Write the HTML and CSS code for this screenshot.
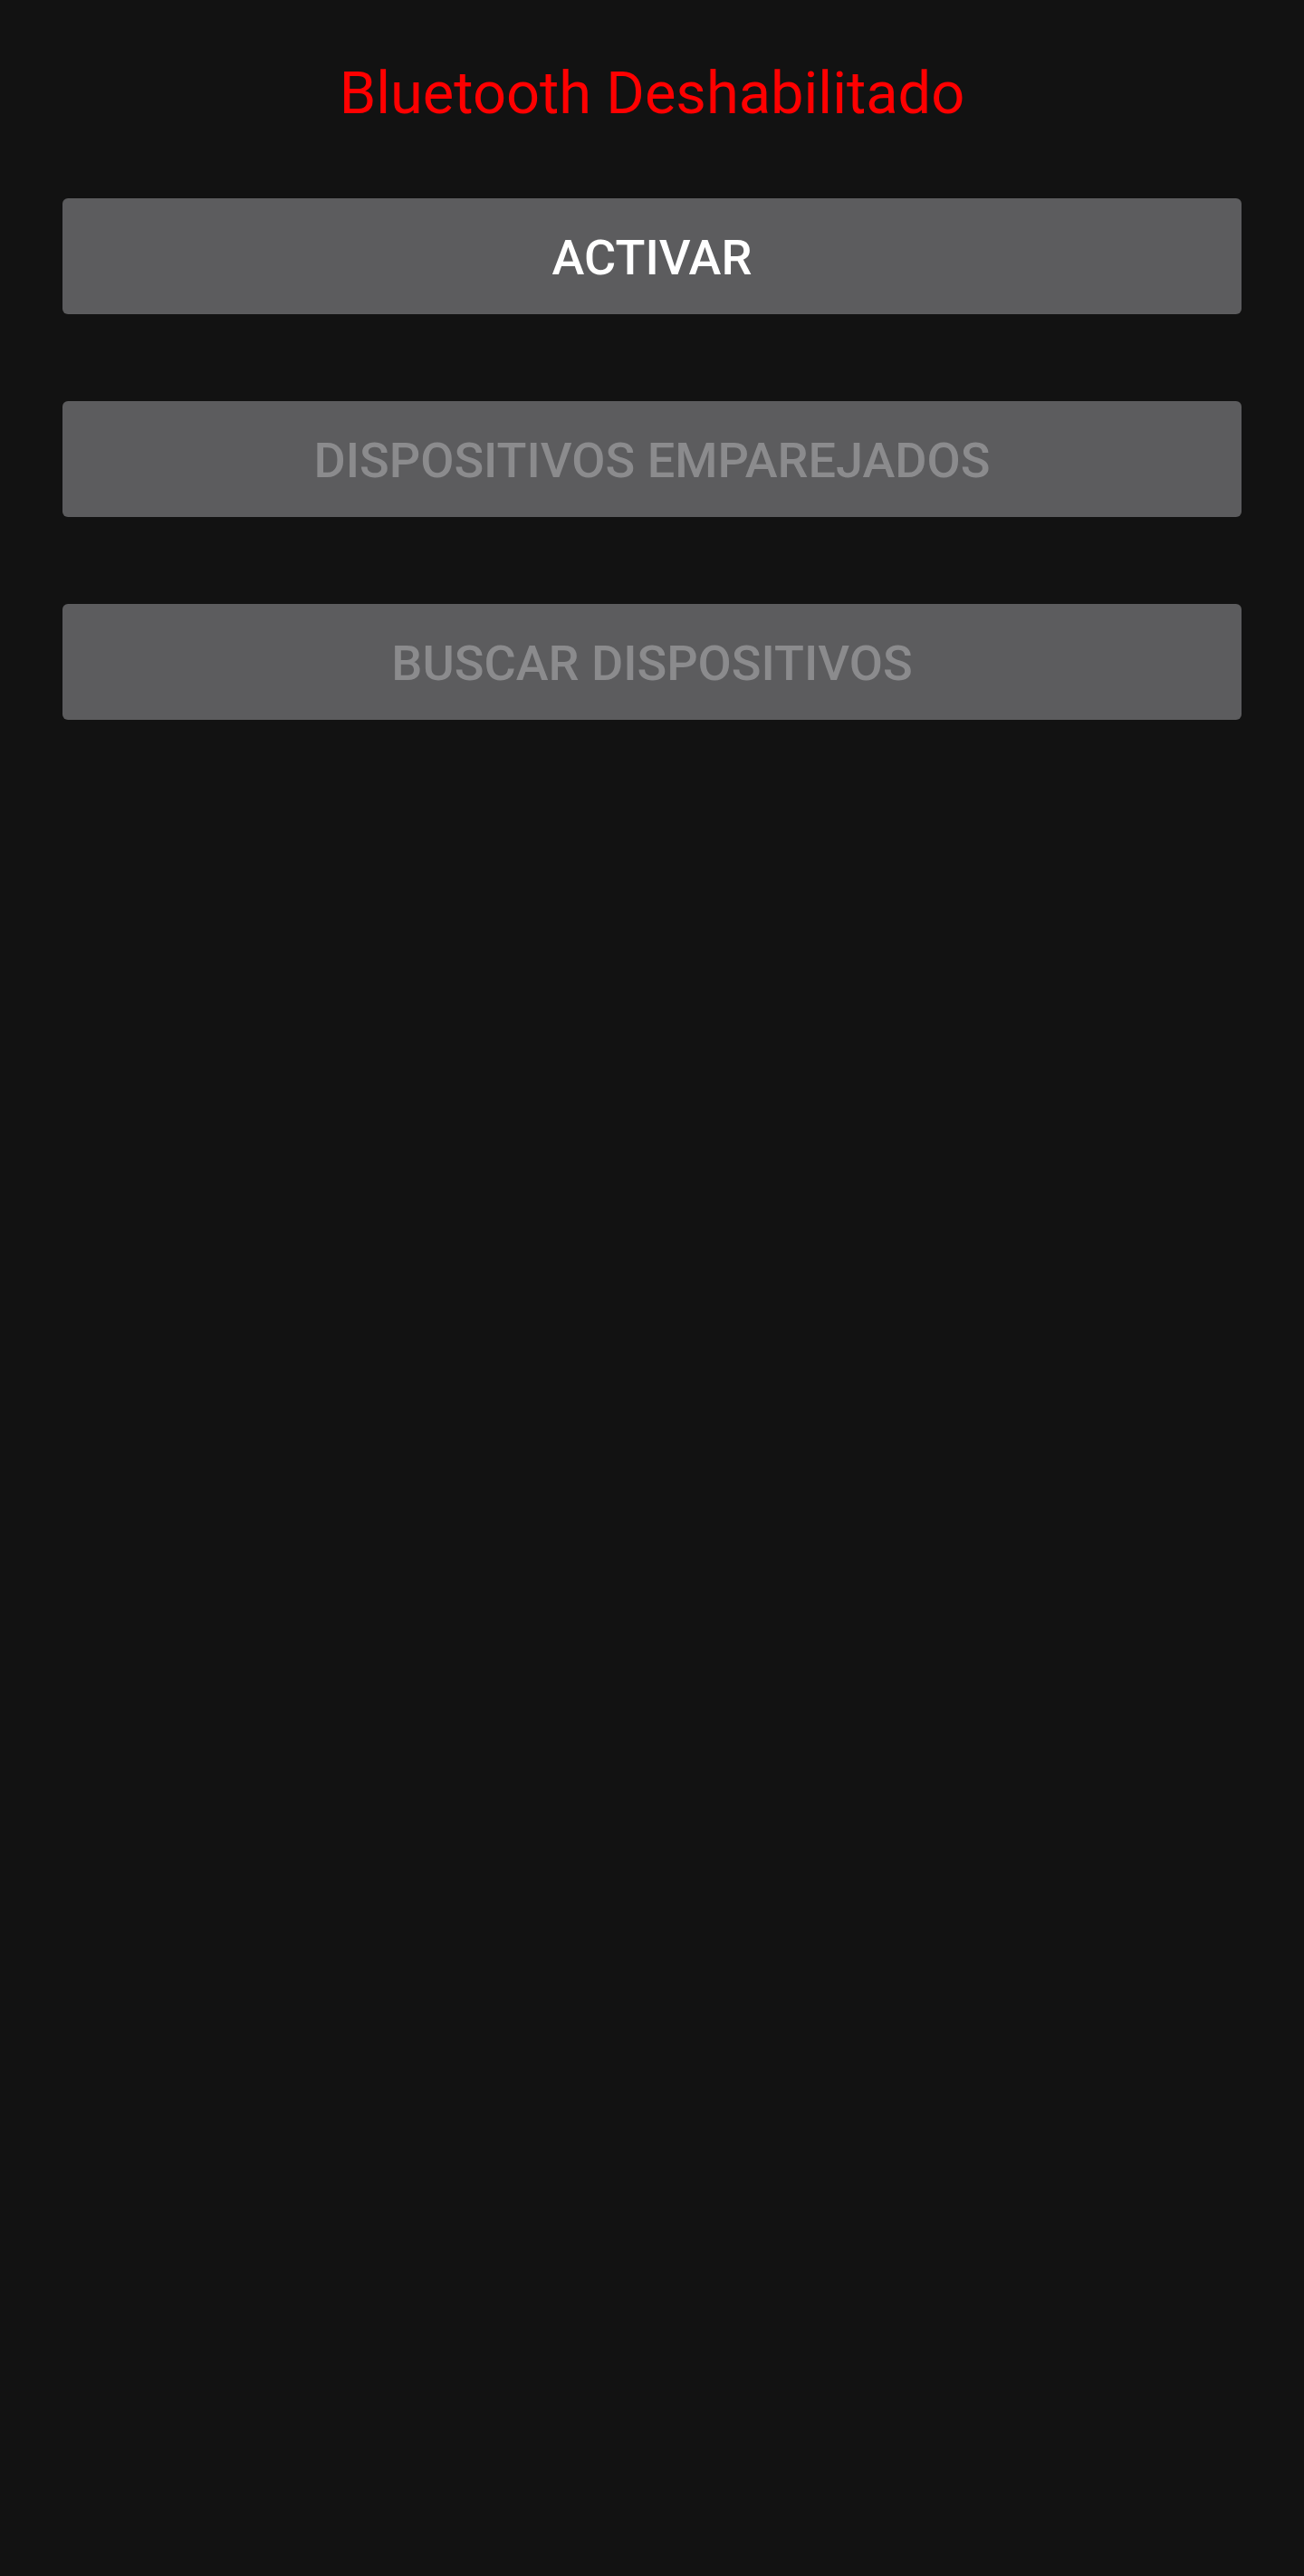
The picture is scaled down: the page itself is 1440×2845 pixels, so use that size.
FILE: index.html
```html
<!DOCTYPE html>
<html lang="es">
<head>
<meta charset="utf-8">
<title>Bluetooth</title>
<link rel="stylesheet" href="styles.css">
</head>
<body>
<main class="screen">
  <h1 class="status">Bluetooth Deshabilitado</h1>
  <div class="actions">
    <button class="btn btn-active">ACTIVAR</button>
    <button class="btn btn-disabled" disabled>DISPOSITIVOS EMPAREJADOS</button>
    <button class="btn btn-disabled" disabled>BUSCAR DISPOSITIVOS</button>
  </div>
</main>
</body>
</html>
```
FILE: styles.css
```css
html, body {
  margin: 0;
  padding: 0;
  background: #121212;
}
.screen {
  min-height: 2845px;
  box-sizing: border-box;
  padding: 71px 69px 0;
  font-family: Roboto, "Liberation Sans", sans-serif;
}
.status {
  margin: 0;
  text-align: center;
  font-size: 65px;
  font-weight: 400;
  line-height: 1;
  color: #ff0000;
}
.actions {
  margin-top: 83px;
  display: flex;
  flex-direction: column;
  gap: 96px;
}
.btn {
  height: 128px;
  border: none;
  border-radius: 6px;
  background: #5c5c5e;
  font-family: Roboto, "Liberation Sans", sans-serif;
  font-size: 54px;
  font-weight: 500;
  padding: 3px 0 0;
}
.btn-active {
  color: #ffffff;
}
.btn-disabled {
  color: #8b8b8d;
}
```
